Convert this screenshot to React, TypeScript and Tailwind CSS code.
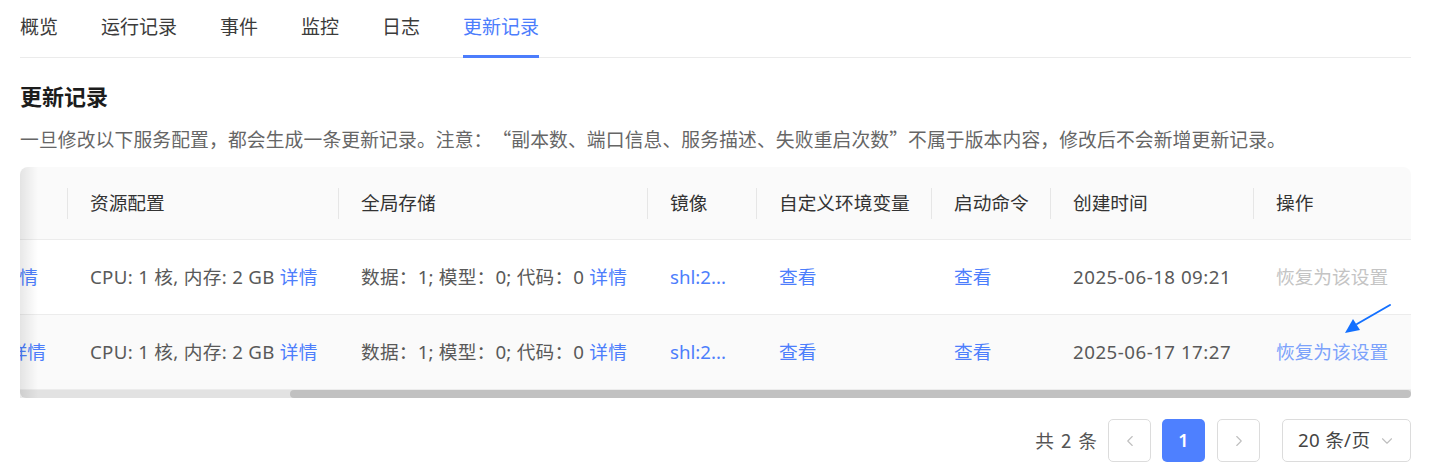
import React from "react";
import { ChevronLeft, ChevronRight, ChevronDown } from "lucide-react";

const cols = "grid grid-cols-[47px_271px_309px_109px_175px_119px_203px_157px]";

function HeadCell({ label, sep = true }: { label: string; sep?: boolean }) {
  return (
    <div className="flex items-center h-full">
      {sep && <div className="w-px h-[31px] bg-[#e6e6e6]" />}
      <span className="ml-[22px] whitespace-nowrap">{label}</span>
    </div>
  );
}

function Cell({ children, extra = "" }: { children: React.ReactNode; extra?: string }) {
  return (
    <div className={`flex items-center h-full pl-[23px] whitespace-nowrap ${extra}`}>{children}</div>
  );
}

const Link = ({ children }: { children: React.ReactNode }) => (
  <span className="text-[#4d7efc]">{children}</span>
);

function Row({
  pr,
  date,
  active,
  bg,
}: {
  pr: string;
  date: string;
  active: boolean;
  bg: string;
}) {
  return (
    <div className={`${cols} h-[75px] border-b border-[#ececec] ${bg} text-[#595959]`}>
      <div className={`flex items-center justify-end h-full overflow-hidden whitespace-nowrap ${pr}`}>
        <Link>详情</Link>
      </div>
      <Cell extra="tracking-[0.3px]">
        CPU: 1 核, 内存: 2 GB&nbsp;<Link>详情</Link>
      </Cell>
      <Cell extra="tracking-[0.2px]">
        数据：1; 模型：0; 代码：0&nbsp;<Link>详情</Link>
      </Cell>
      <Cell>
        <Link>shl:2...</Link>
      </Cell>
      <Cell>
        <Link>查看</Link>
      </Cell>
      <Cell>
        <Link>查看</Link>
      </Cell>
      <Cell extra="tracking-[0.5px]">{date}</Cell>
      <Cell>
        {active ? (
          <span className="text-[#7ca2fb]">恢复为该设置</span>
        ) : (
          <span className="text-[#c4c4c4]">恢复为该设置</span>
        )}
      </Cell>
    </div>
  );
}

export default function App() {
  const tabs = ["概览", "运行记录", "事件", "监控", "日志", "更新记录"];
  return (
    <div className="w-[1431px] h-[470px] bg-white px-[20px] font-['Noto_Sans','Noto_Sans_CJK_SC',sans-serif] text-[18.7px] relative overflow-hidden">
      {/* Tabs */}
      <div className="flex gap-[43px] h-[58px] border-b border-[#ebebeb]">
        {tabs.map((t) => (
          <div
            key={t}
            className={`flex items-center h-[58px] -mb-px border-b-[3px] text-[19px] ${
              t === "更新记录"
                ? "border-[#4c7dfc] text-[#4c7dfc]"
                : "border-transparent text-[#3b3b3b]"
            }`}
          >
            {t}
          </div>
        ))}
      </div>

      <div className="mt-[22px] h-[30px] flex items-center text-[22px] font-bold text-[#1c1c1c] font-['Noto_Sans_CJK_SC',sans-serif]">
        更新记录
      </div>
      <div className="mt-[16px] h-[26px] flex items-center text-[#666666] font-['Noto_Sans_CJK_SC',sans-serif] whitespace-nowrap text-[18.76px] tracking-[0.15px]">
        一旦修改以下服务配置，都会生成一条更新记录。注意：
        <span className="inline-block w-[18.76px] text-right">“</span>
        副本数、端口信息、服务描述、失败重启次数
        <span className="inline-block w-[18.76px] text-left">”</span>
        不属于版本内容，修改后不会新增更新记录。
      </div>

      {/* Table */}
      <div className="mt-[15px] relative rounded-t-[8px] overflow-hidden">
        <div className={`${cols} h-[73px] bg-[#fafafa] border-b border-[#ececec] text-[#333333]`}>
          <div />
          <HeadCell label="资源配置" />
          <HeadCell label="全局存储" />
          <HeadCell label="镜像" />
          <HeadCell label="自定义环境变量" />
          <HeadCell label="启动命令" />
          <HeadCell label="创建时间" />
          <HeadCell label="操作" />
        </div>
        <Row pr="pr-[29px]" date="2025-06-18 09:21" active={false} bg="bg-white" />
        <Row pr="pr-[21px]" date="2025-06-17 17:27" active={true} bg="bg-[#fafafa]" />
        <div className="h-[8px] bg-[#e2e2e2] rounded-b-[6px] flex">
          <div className="ml-[270px] flex-1 bg-[#c1c1c1] rounded-full" />
        </div>
        <div className="absolute left-0 top-0 bottom-0 w-[18px] bg-linear-to-r from-[rgba(0,0,0,0.09)] to-transparent pointer-events-none" />
      </div>

      {/* Pagination */}
      <div className="mt-[21px] flex justify-end items-center h-[43px] text-[#555555]">
        <span className="mr-[11px] flex gap-[7px] font-['Noto_Sans_CJK_SC',sans-serif]">
          <span>共</span>
          <span>2</span>
          <span>条</span>
        </span>
        <div className="w-[43px] h-[43px] border border-[#dcdcdc] rounded-[5px] flex items-center justify-center">
          <ChevronLeft size={18} color="#bfbfbf" strokeWidth={1.5} />
        </div>
        <div className="ml-[11px] w-[43px] h-[43px] rounded-[5px] bg-[#4e80ff] text-white flex items-center justify-center font-semibold text-[18px]">
          1
        </div>
        <div className="ml-[12px] w-[43px] h-[43px] border border-[#dcdcdc] rounded-[5px] flex items-center justify-center">
          <ChevronRight size={18} color="#bfbfbf" strokeWidth={1.5} />
        </div>
        <div className="ml-[22px] w-[129px] h-[43px] border border-[#dcdcdc] rounded-[5px] flex items-center pl-[15px] pr-[14px] justify-between text-[#444444]">
          <span className="tracking-[0.3px]">20 条/页</span>
          <ChevronDown size={18} color="#bfbfbf" strokeWidth={1.5} />
        </div>
      </div>

      {/* Annotation arrow */}
      <svg className="absolute left-[1340px] top-[300px]" width="56" height="40" viewBox="0 0 56 40">
        <line x1="50" y1="5" x2="17" y2="24" stroke="#1370ff" strokeWidth="2" strokeLinecap="round" />
        <polygon points="5,33 13,19 20,30" fill="#1370ff" />
      </svg>
    </div>
  );
}
